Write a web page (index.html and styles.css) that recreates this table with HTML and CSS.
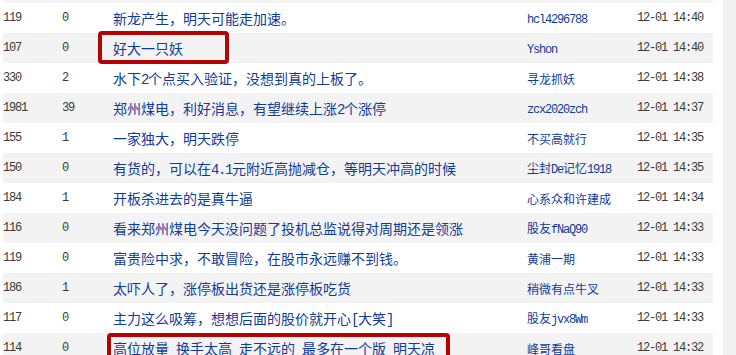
FILE: index.html
```html
<!DOCTYPE html>
<html lang="zh-CN">
<head>
<meta charset="utf-8">
<title>帖子列表</title>
<link rel="stylesheet" href="styles.css">
</head>
<body>
<div class="page">
  <div class="list">
    <div class="row alt top-strip"></div>
    <div class="row"><span class="num">119</span><span class="num">0</span><a class="title">新龙产生，明天可能走加速。</a><a class="author"><span class="lat">hcl4296788</span></a><span class="num">12-01 14:40</span></div>
    <div class="row alt"><span class="num">107</span><span class="num">0</span><a class="title">好大一只妖</a><a class="author"><span class="lat">Yshon</span></a><span class="num">12-01 14:40</span></div>
    <div class="row"><span class="num">330</span><span class="num">2</span><a class="title">水下<span class="lat">2</span>个点买入验证，没想到真的上板了。</a><a class="author">寻龙抓妖</a><span class="num">12-01 14:38</span></div>
    <div class="row alt"><span class="num">1981</span><span class="num">39</span><a class="title">郑州煤电，利好消息，有望继续上涨<span class="lat">2</span>个涨停</a><a class="author"><span class="lat">zcx2020zch</span></a><span class="num">12-01 14:37</span></div>
    <div class="row"><span class="num">155</span><span class="num">1</span><a class="title">一家独大，明天跌停</a><a class="author">不买高就行</a><span class="num">12-01 14:35</span></div>
    <div class="row alt"><span class="num">150</span><span class="num">0</span><a class="title">有货的，可以在<span class="lat">4.1</span>元附近高抛减仓，等明天冲高的时候</a><a class="author">尘封<span class="lat">De</span>记忆<span class="lat">1918</span></a><span class="num">12-01 14:35</span></div>
    <div class="row"><span class="num">184</span><span class="num">1</span><a class="title">开板杀进去的是真牛逼</a><a class="author">心系众和许建成</a><span class="num">12-01 14:34</span></div>
    <div class="row alt"><span class="num">116</span><span class="num">0</span><a class="title">看来郑州煤电今天没问题了投机总监说得对周期还是领涨</a><a class="author">股友<span class="lat">fNaQ90</span></a><span class="num">12-01 14:33</span></div>
    <div class="row"><span class="num">119</span><span class="num">0</span><a class="title">富贵险中求，不敢冒险，在股市永远赚不到钱。</a><a class="author">黄浦一期</a><span class="num">12-01 14:33</span></div>
    <div class="row alt"><span class="num">186</span><span class="num">1</span><a class="title">太吓人了，涨停板出货还是涨停板吃货</a><a class="author">稍微有点牛叉</a><span class="num">12-01 14:33</span></div>
    <div class="row"><span class="num">117</span><span class="num">0</span><a class="title">主力这么吸筹，想想后面的股价就开心<span class="lat">[</span>大笑<span class="lat">]</span></a><a class="author">股友<span class="lat">jvx8Wm</span></a><span class="num">12-01 14:33</span></div>
    <div class="row alt"><span class="num">114</span><span class="num">0</span><a class="title">高位放量<span class="lat"> </span>换手太高<span class="lat"> </span>走不远的<span class="lat"> </span>最多在一个版<span class="lat"> </span>明天凉</a><a class="author">峰哥看盘</a><span class="num">12-01 14:32</span></div>
  </div>
  <div class="gutter"></div>
  <div class="track"></div>
  <div class="mark mark-one"></div>
  <div class="mark mark-two"></div>
</div>
</body>
</html>
```

FILE: styles.css
```css
html, body {
  margin: 0;
  padding: 0;
  background: #ffffff;
}

body {
  font-family: "Noto Sans CJK SC", "Liberation Sans", sans-serif;
  overflow: hidden;
}

.page {
  position: relative;
  display: flex;
  height: 355px;
  overflow: hidden;
}

.list {
  width: 710px;
  margin-left: 3px;
  flex: none;
}

.gutter {
  width: 10px;
  flex: none;
}

.track {
  width: 13px;
  flex: none;
  background: #f1f1f1;
}

.row {
  display: grid;
  grid-template-columns: 59px 51px 414px 110px 76px;
  align-items: center;
  height: 30px;
  white-space: nowrap;
}

.row.alt {
  background: #f3f3f3;
}

.row.top-strip {
  height: 3px;
}

.num {
  font-family: "Liberation Mono", monospace;
  font-size: 12px;
  letter-spacing: -0.1em;
  color: #3a3a3a;
}

.title {
  font-size: 14px;
  color: #0f3b9c;
  text-decoration: none;
}

.author {
  font-size: 12px;
  color: #0f3b9c;
  text-decoration: none;
}

.lat {
  font-family: "Liberation Mono", monospace;
  letter-spacing: -0.1em;
}

.mark {
  position: absolute;
  border: 4px solid #b30303;
  border-radius: 4px;
  box-sizing: border-box;
}

.mark-one {
  left: 98px;
  top: 31px;
  width: 131px;
  height: 33px;
}

.mark-two {
  left: 107px;
  top: 333px;
  width: 343px;
  height: 33px;
}
```
